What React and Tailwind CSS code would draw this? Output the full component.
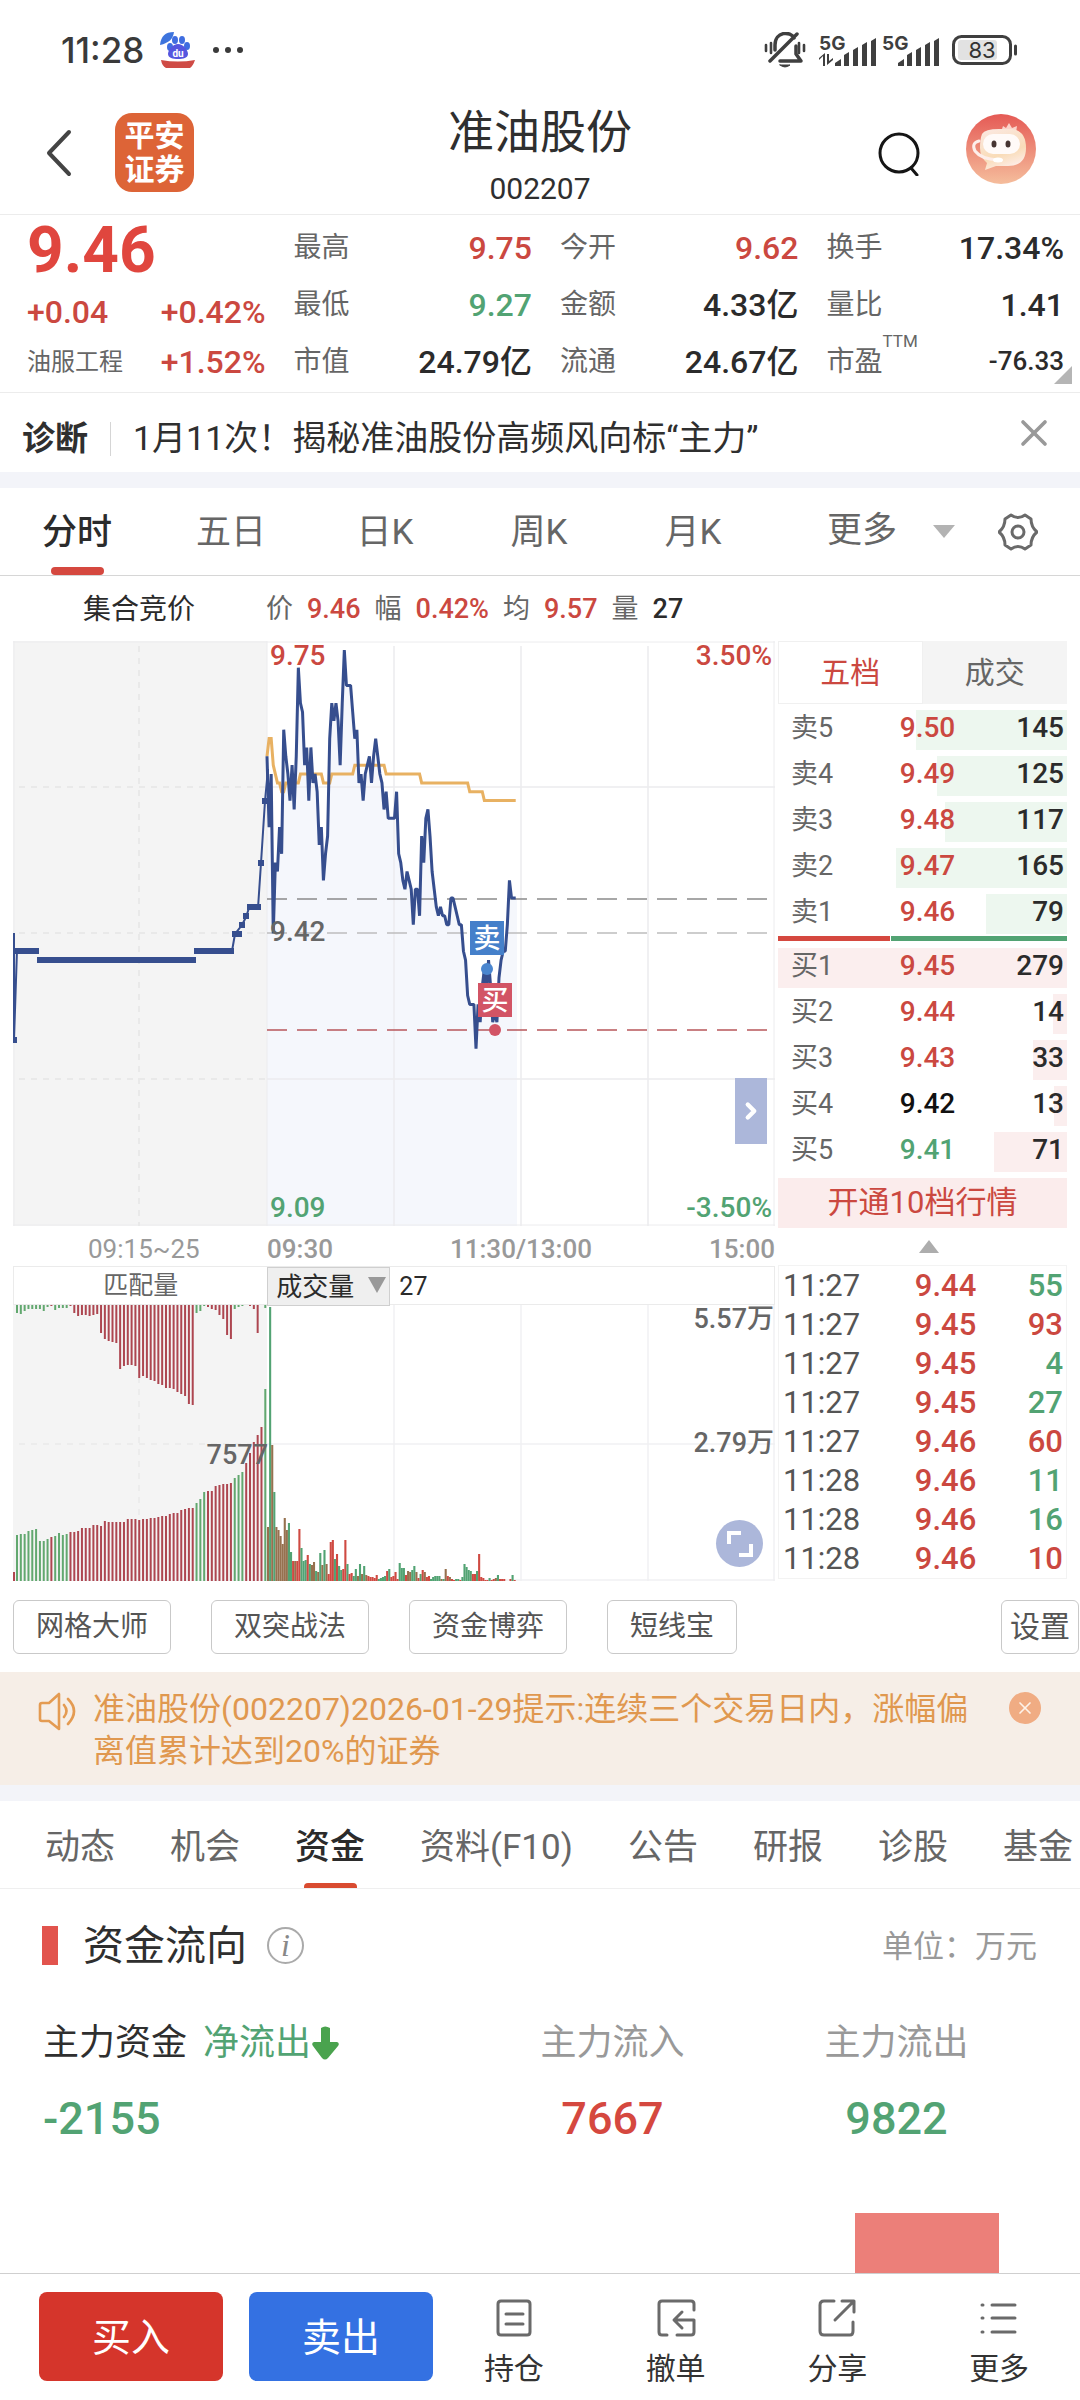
import { useState } from "react";
import { ChevronRight, X } from "lucide-react";

const QUOTES = [
  [["最高", "9.75", "up"], ["今开", "9.62", "up"], ["换手", "17.34%", "flat"]],
  [["最低", "9.27", "down"], ["金额", "4.33亿", "flat"], ["量比", "1.41", "flat"]],
  [["市值", "24.79亿", "flat"], ["流通", "24.67亿", "flat"], ["市盈", "-76.33", "flat"]],
];

const TONE = {
  up: "text-[#cb4840]",
  down: "text-[#52a373]",
  flat: "text-[#2b2b2b]",
};

const PERIODS = ["分时", "五日", "日K", "周K", "月K"];
const TOOLS = ["网格大师", "双突战法", "资金博弈", "短线宝"];
const SECTIONS = ["动态", "机会", "资金", "资料(F10)", "公告", "研报", "诊股", "基金"];

const ASKS = [
  ["卖5", "9.50", 145],
  ["卖4", "9.49", 125],
  ["卖3", "9.48", 117],
  ["卖2", "9.47", 165],
  ["卖1", "9.46", 79],
];
const BIDS = [
  ["买1", "9.45", 279],
  ["买2", "9.44", 14],
  ["买3", "9.43", 33],
  ["买4", "9.42", 13],
  ["买5", "9.41", 71],
];
const MAX_LEVEL = 279;

const TRADES = [
  ["11:27", "9.44", 55, "down"],
  ["11:27", "9.45", 93, "up"],
  ["11:27", "9.45", 4, "down"],
  ["11:27", "9.45", 27, "down"],
  ["11:27", "9.46", 60, "up"],
  ["11:28", "9.46", 11, "down"],
  ["11:28", "9.46", 16, "down"],
  ["11:28", "9.46", 10, "up"],
];

// 每分钟价格，单位为分，相对昨收 9.42
const PRICE = [
  20, 12, 18, 0, 8, 7, 12, 9, 23, 20, 18, 15, 19, 14, 20, 30, 26, 25, 19, 21,
  15, 21, 17, 18, 16, 10, 12, 6, 9, 11, 22, 26, 24, 26, 24, 19, 26, 32, 28, 28,
  28, 25, 22, 23, 17, 18, 15, 18, 19, 20, 17, 20, 22, 20, 18, 17, 14, 16, 13, 13,
  13, 13, 16, 9, 8, 6, 5, 7, 6, 5, 1, 5, 5, 2, 11, 8, 13, 14, 11, 7,
  5, 3, 2, 3, 2, 2, 1, 1, 4, 4, 3, 2, 1, 1, -2, -3, -7, -8, -8, -8,
  -13, -8, -10, -6, -4, -7, -3, -6, -10, -9, -10, -5, -3, -2, -2, 1, 6, 4, 4, 4,
];

// 均价：[分钟, 值]
const AVERAGE = [
  [0, 20], [1, 22], [2, 22], [3, 19], [5, 17], [6, 17], [7, 16], [8, 16], [9, 17],
  [15, 17], [16, 18], [26, 18], [27, 17], [30, 17], [31, 18], [41, 18], [42, 19],
  [56, 19], [57, 18], [73, 18], [74, 17], [96, 17], [97, 16], [103, 16], [104, 15], [119, 15],
];

const AUCTION_MATCHED = [
  46, 47, 47, 50, 51, 52, 40, 40, 42, 44, 45, 48, 46, 47, 49, 49, 50, 53, 53, 53,
  56, 56, 55, 60, 59, 59, 59, 59, 59, 62, 62, 62, 61, 62, 62, 63, 63, 64, 65, 65,
  67, 68, 68, 71, 72, 73, 73, 78, 82, 89, 90, 90, 95, 96, 97, 97, 98, 103, 106, 109,
  118, 128, 139, 146, 154, 192,
];
const AUCTION_UNMATCHED = [
  8, 9, 6, 4, 4, 4, 4, 6, 2, 1, 5, 3, 3, 3, 1, 8, 11, 10, 10, 11,
  10, 9, 28, 34, 36, 37, 38, 64, 61, 60, 60, 61, 73, 71, 73, 75, 76, 79, 80, 83,
  83, 84, 87, 89, 91, 99, 100, 8, 6, 1, 2, 4, 5, 10, 14, 30, 34, 4, 2, 1,
  0, 1, 4, 28, 0, 3,
];
const AUCTION_SIDE =
  "gggggggggrggggrrrrrrrrrrrrrrrrrrrrrrrrrrrrrrrrrgggrrrrrrrgggrrrrrg";

const VOLUME = [
  [54, "b"], [274, "g"], [136, "b"], [89, "g"], [54, "b"], [51, "b"], [45, "b"], [37, "b"],
  [63, "b"], [51, "b"], [58, "g"], [29, "g"], [20, "r"], [20, "b"], [20, "r"], [52, "r"],
  [33, "g"], [20, "g"], [21, "g"], [26, "r"], [17, "g"], [16, "b"], [19, "b"], [10, "g"],
  [9, "b"], [28, "g"], [16, "b"], [31, "g"], [17, "b"], [7, "r"], [39, "r"], [41, "r"],
  [22, "g"], [27, "r"], [15, "g"], [11, "g"], [12, "r"], [41, "r"], [17, "g"], [7, "r"],
  [8, "r"], [5, "g"], [12, "g"], [5, "b"], [17, "g"], [7, "b"], [15, "g"], [6, "b"],
  [5, "r"], [4, "r"], [4, "r"], [3, "r"], [6, "r"], [2, "g"], [3, "g"], [4, "g"],
  [5, "g"], [10, "r"], [12, "g"], [4, "r"], [5, "r"], [9, "r"], [2, "r"], [18, "g"],
  [13, "g"], [13, "g"], [6, "r"], [10, "b"], [9, "b"], [11, "g"], [15, "g"], [9, "b"],
  [3, "r"], [7, "g"], [11, "r"], [9, "b"], [4, "r"], [5, "r"], [2, "g"], [4, "g"],
  [5, "g"], [5, "g"], [5, "g"], [2, "b"], [2, "g"], [12, "b"], [5, "r"], [4, "b"],
  [2, "r"], [1, "r"], [2, "g"], [2, "g"], [1, "r"], [4, "g"], [17, "g"], [14, "g"],
  [11, "g"], [10, "g"], [7, "r"], [7, "r"], [10, "g"], [27, "r"], [4, "r"], [3, "r"],
  [1, "r"], [1, "r"], [3, "g"], [1, "r"], [2, "r"], [3, "b"], [6, "g"], [2, "r"],
  [2, "r"], [2, "r"], [0, "r"], [0, "r"], [2, "r"], [6, "g"], [1, "r"],
];

const BAR_COLOR = { g: "#52a373", r: "#cf4a42", b: "#96714f" };

const minuteX = (m) => 254 + m * 2.09;
const priceY = (t) => 292.5 - t * 8.86;
const toPoints = (list) => list.map(([m, t]) => `${minuteX(m)},${priceY(t)}`).join(" ");

function StatusBar() {
  return (
    <div className="flex h-[100px] items-center pl-[61px] pr-[62px] text-[#3a3a3a]">
      <span className="font-[Inter] text-[35px] font-medium">11:28</span>
      <svg className="ml-4 size-[36px]" viewBox="0 0 36 36">
        <path d="M0 13C1 4 5 0 14 0c-1 7-5 11-14 13z" fill="#3d74dd" />
        <ellipse cx="10" cy="15" rx="3" ry="4" fill="#3f6de0" />
        <ellipse cx="15" cy="8" rx="3" ry="4" fill="#3f6de0" />
        <ellipse cx="22" cy="8" rx="3" ry="4" fill="#3f6de0" />
        <ellipse cx="27" cy="14" rx="3" ry="4" fill="#3f6de0" />
        <path d="M18 12c5 0 10 6 10 10 0 4-5 5-10 5S8 26 8 22c0-4 5-10 10-10z" fill="#5556df" />
        <text x="18" y="25" textAnchor="middle" fontSize="10" fontWeight="700" fill="#fff">du</text>
        <path d="M1 28q17 3 34 0-2 6-5 8H6q-4-2-5-8z" fill="#cf4b45" />
      </svg>
      <svg className="ml-4 h-2 w-8" viewBox="0 0 32 8" fill="#3a3a3a">
        <circle cx="4" cy="4" r="3" />
        <circle cx="16" cy="4" r="3" />
        <circle cx="28" cy="4" r="3" />
      </svg>
      <svg className="ml-auto h-[36px] w-[42px]" viewBox="0 0 42 36" fill="none" stroke="#3f3f3f" strokeWidth="3.500" strokeLinecap="round" strokeLinejoin="round">
        <path d="M11 18v-5C11-1 27-1 30 6M16 29h21l-5-7v-8M6 29L33 2" />
        <path d="M2 13v6M7 11v10M35 11v10M40 13v6" strokeWidth="2.600" />
        <path d="M16 33h10q-5 4-10 0z" fill="#3f3f3f" strokeWidth="1" />
      </svg>
      <Signal arrows />
      <Signal />
      <svg className="ml-3 h-[30px] w-[66px]" viewBox="0 0 66 30">
        <rect x="6" y="5" width="39" height="20" rx="3" fill="#e2e2e2" />
        <rect x="1.500" y="1.500" width="57" height="27" rx="8" fill="none" stroke="#3f3f3f" strokeWidth="3" />
        <path d="M63.500 11v8" stroke="#3f3f3f" strokeWidth="3" strokeLinecap="round" />
        <text x="30" y="23" textAnchor="middle" fontSize="22" className="font-[Inter]" fill="#333">83</text>
      </svg>
    </div>
  );
}

function Signal({ arrows }) {
  return (
    <svg className={arrows ? "ml-[13px] h-[40px] w-[58px] overflow-visible" : "ml-[5px] h-[40px] w-[58px] overflow-visible"} viewBox="0 0 58 40" fill="#3f3f3f">
      <text x="0" y="20" fontSize="19" fontWeight="700" className="font-[Inter]">5G</text>
      {arrows && <path d="M4 36V26L0 30v-2l6-5v13zM8 24v11l6-5v-2l-4 3v-7z" />}
      <path d="M16 36v-3l6-4v7zM25 36V25l5-3v14zM34 36V20l5-3v19zM43 36V15l5-3v24zM52 36v-25l5-3v28z" />
    </svg>
  );
}

function Header() {
  return (
    <header className="grid h-[115px] grid-cols-[1fr_auto_1fr] items-start border-b border-[#ececec]">
      <div className="flex items-center gap-[43px] pl-[44px] pt-[13px]">
        <button aria-label="返回" className="py-3">
          <svg className="h-12 w-7" viewBox="0 0 28 48" fill="none" stroke="#444" strokeWidth="4" strokeLinecap="round" strokeLinejoin="round">
            <path d="M25 3L5 24l20 21" />
          </svg>
        </button>
        <div className="grid size-[79px] place-content-center rounded-[17px] bg-[#dd6437] text-center text-[30px] font-bold leading-[34px] text-white">
          <span>平安</span>
          <span>证券</span>
        </div>
      </div>
      <div className="flex flex-col items-center text-[#2f2f2f]">
        <h1 className="text-[46px] leading-[64px]">准油股份</h1>
        <span className="text-[30px] leading-[50px]">002207</span>
      </div>
      <div className="flex items-center justify-end gap-[46px] pr-[44px] pt-[14px]">
        <button aria-label="搜索">
          <svg className="mt-2 h-[46px] w-[42px]" viewBox="0 0 42 46" fill="none" stroke="#151515" strokeWidth="3" strokeLinecap="round">
            <circle cx="21" cy="23" r="19" />
            <path d="M33 38l6 7" />
          </svg>
        </button>
        <button aria-label="智能客服">
          <svg className="size-[70px]" viewBox="0 0 70 70">
            <defs>
              <linearGradient id="face" x1="0" y1="0" x2="0" y2="1">
                <stop offset="0" stopColor="#e55a55" />
                <stop offset="1" stopColor="#f5bd9c" />
              </linearGradient>
              <linearGradient id="body" x1="0" y1="0" x2="0.4" y2="1">
                <stop offset="0" stopColor="#fbe9e4" />
                <stop offset="0.7" stopColor="#f9dcb8" />
                <stop offset="1" stopColor="#fdebe2" />
              </linearGradient>
            </defs>
            <circle cx="35" cy="35" r="35" fill="url(#face)" />
            <path d="M35 18l2-6 3 2 3-5 3 5 5-2-1 7z" fill="#fbd3ca" />
            <path d="M16 20q3-5 17-5h12q15 1 15 19c0 12-6 18-18 18H30l-11 4 2-7q-7-6-7-15 0-9 2-14z" fill="url(#body)" />
            <rect x="17" y="20" width="37" height="20" rx="10" fill="#fffaf8" />
            <ellipse cx="28" cy="30" rx="2.500" ry="3.500" fill="#463531" />
            <ellipse cx="42" cy="30" rx="2.500" ry="3.500" fill="#463531" />
            <path d="M13 27q-8 2-4 10 6 8 23 9" fill="none" stroke="#fdeeea" strokeWidth="3" strokeLinecap="round" />
            <ellipse cx="32" cy="46" rx="5" ry="2.500" fill="#fff" />
          </svg>
        </button>
      </div>
    </header>
  );
}

function Quote() {
  return (
    <section className="relative grid h-[178px] grid-cols-[239fr_239fr_239fr_238fr] gap-x-7 border-b border-[#ececec] pl-[27px] pr-4 text-[32px] font-medium">
      <div className="flex flex-col pt-1 text-[#cb4840]">
        <strong className="text-[64px] font-bold leading-[64px] text-[#e0463e]">9.46</strong>
        <div className="flex h-[58px] items-center justify-between">
          <span>+0.04</span>
          <span>+0.42%</span>
        </div>
        <div className="flex h-[42px] items-center justify-between">
          <span className="text-[24px] font-normal text-[#666]">油服工程</span>
          <span>+1.52%</span>
        </div>
      </div>
      {[0, 1, 2].map((col) => (
        <dl key={col} className="flex flex-col pt-1">
          {QUOTES.map((row) => {
            const [label, value, tone] = row[col];
            return (
              <div key={label} className="flex h-[57px] items-center justify-between">
                <dt className="text-[28px] font-normal text-[#666]">
                  {label}
                  {label === "市盈" && <sup className="-top-6 text-[17px]">TTM</sup>}
                </dt>
                <dd className={`${TONE[tone]} ${value === "-76.33" ? "text-[26px]" : ""}`}>{value}</dd>
              </div>
            );
          })}
        </dl>
      ))}
      <i className="absolute bottom-2 right-2 border-b-[18px] border-l-[18px] border-b-[#b5b5b5] border-l-transparent" />
    </section>
  );
}

function PeriodTabs({ period, onChange }) {
  return (
    <nav className="grid h-[88px] grid-cols-[770fr_310fr] border-b border-[#d6d6d6] text-[35px] text-[#666]">
      <div className="grid grid-cols-5">
        {PERIODS.map((p) => (
          <button
            key={p}
            onClick={() => onChange(p)}
            className={`flex flex-col items-center justify-between ${p === period ? "font-medium text-[#2b2b2b]" : ""}`}
          >
            <span className="pt-4 leading-[58px]">{p}</span>
            <i className={`h-2 w-[53px] rounded-full ${p === period ? "bg-[#d5483f]" : ""}`} />
          </button>
        ))}
      </div>
      <div className="flex items-center justify-between pl-[57px] pr-[42px]">
        <button className="flex items-center gap-9">
          更多
          <i className="border-x-[11px] border-t-[13px] border-x-transparent border-t-[#b3b3b3]" />
        </button>
        <button aria-label="图表设置">
          <svg className="size-[40px]" viewBox="0 0 40 40" fill="none" stroke="#6a6a6a" strokeWidth="3" strokeLinejoin="round">
            <path d="M13 3q7 5 14 0l6 4q0 8 6 13-6 5-6 13l-6 4q-7-5-14 0l-6-4q0-8-6-13 6-5 6-13z" />
            <circle cx="20" cy="20" r="6" />
          </svg>
        </button>
      </div>
    </nav>
  );
}

function PriceChart() {
  const line = toPoints(PRICE.map((t, i) => [i, t]));
  return (
    <svg className="block h-auto w-full overflow-visible text-[28px] font-medium" viewBox="0 0 762 585">
      <rect x="0" y="0" width="254" height="585" fill="#f4f4f4" />
      <polygon points={`254,585 ${line} 504,257 504,585`} fill="#f5f7fc" />
      <g stroke="#ececee" strokeWidth="2">
        <path d="M0 1h762M0 584h762M1 0v585M254 0v585M761 0v585" strokeWidth="1" />
        <path d="M381 5v580M508 5v580M635 5v580M254 146h508M254 438h508" strokeWidth="1.500" />
        <path d="M126 5v580M6 146h248M6 292h248M6 438h248" strokeDasharray="6 6" stroke="#e9e9e9" />
      </g>
      <g strokeDasharray="20 10" strokeWidth="1.500">
        <path d="M254 258h500" stroke="#8b8b8b" />
        <path d="M254 292h500" stroke="#bdbdbd" />
        <path d="M254 389h500" stroke="#b8575b" />
      </g>
      <polyline points={toPoints(AVERAGE)} fill="none" stroke="#e8b162" strokeWidth="3" />
      <polyline points={line} fill="none" stroke="#364e8e" strokeWidth="3" strokeLinejoin="bevel" />
      {/* 集合竞价 */}
      <g fill="none" stroke="#364e8e">
        <path d="M1 292v107l3-90M219 310l3-17 7-9 4-8 3-9M245 267l3-45 4-62 3-32" strokeWidth="2" />
        <path d="M2 310h24M24 319h159M181 310h40M219 293h10M226 284h6M230 275h6M234 266h14M245 222h6M249 160h6M0 399h4" strokeWidth="6" />
      </g>
      <text x="257" y="24" fill="#cb4840">9.75</text>
      <text x="257" y="300" fill="#666">9.42</text>
      <text x="257" y="576" fill="#52a373">9.09</text>
      <text x="759" y="24" textAnchor="end" fill="#cb4840">3.50%</text>
      <text x="759" y="576" textAnchor="end" fill="#52a373">-3.50%</text>
      <g textAnchor="middle" fontSize="27">
        <circle cx="474" cy="328" r="6" fill="#4a86cf" />
        <rect x="457" y="280" width="34" height="34" fill="#4580ca" />
        <text x="474" y="307" fill="#fff">卖</text>
        <rect x="465" y="342" width="34" height="34" fill="#d25465" />
        <text x="482" y="369" fill="#fff">买</text>
        <circle cx="482" cy="389" r="6" fill="#d25465" />
      </g>
    </svg>
  );
}

function VolumeChart() {
  return (
    <svg className="block h-auto w-full overflow-visible text-[27px] font-medium" viewBox="0 0 762 276">
      <rect x="0" y="0" width="254" height="276" fill="#f4f4f4" />
      <g stroke="#f1f1f3" strokeWidth="1.500" fill="none">
        <path d="M381 0v276M508 0v276M635 0v276M254 139h508M761 0v276M0 275h762" />
        <path d="M126 0v276M6 139h248" strokeDasharray="6 6" stroke="#e9e9e9" />
      </g>
      <rect x="0" y="267" width="2" height="9" fill="#b14650" />
      {AUCTION_MATCHED.map((h, i) => {
        const color = AUCTION_SIDE[i] === "g" ? "#62a86f" : "#ad4650";
        const x = 3 + i * 3.82;
        return (
          <g key={i} fill={color}>
            <rect x={x} y={276 - h} width="2" height={h} />
            <rect x={x} y="0" width="2" height={AUCTION_UNMATCHED[i]} />
          </g>
        );
      })}
      {VOLUME.map(([h, side], i) => (
        <rect key={i} x={minuteX(i)} y={276 - h} width="2.100" height={h} fill={BAR_COLOR[side]} />
      ))}
      <g fill="#666">
        <text x="255" y="159" textAnchor="end">7577</text>
        <text x="761" y="23" textAnchor="end">5.57万</text>
        <text x="761" y="147" textAnchor="end">2.79万</text>
      </g>
    </svg>
  );
}

function ChartColumn() {
  return (
    <div>
      <div className="relative">
        <PriceChart />
        <button aria-label="收起盘口" className="absolute bottom-[14%] right-2 grid h-[66px] w-8 place-items-center bg-[#acb7da] text-white">
          <ChevronRight size={26} strokeWidth={4} />
        </button>
      </div>
      <div className="grid h-[40px] grid-cols-[254fr_508fr] items-center pt-1 text-[26px] text-[#999]">
        <span className="pl-[75px]">09:15~25</span>
        <div className="grid grid-cols-3 font-medium">
          <span>09:30</span>
          <span className="text-center">11:30/13:00</span>
          <span className="text-right">15:00</span>
        </div>
      </div>
      <div className="grid h-[39px] grid-cols-[254fr_508fr] border border-[#ebebeb]">
        <span className="text-center text-[25px] leading-[38px] text-[#666]">匹配量</span>
        <div className="flex items-center gap-[9px]">
          <label className="relative">
            <select aria-label="副图指标" className="h-[39px] w-[123px] appearance-none border border-[#cfcfcf] bg-[#efefef] pl-2 text-[26px] leading-[36px] text-[#2b2b2b]">
              <option>成交量</option>
            </select>
            <i className="pointer-events-none absolute right-1 top-[10px] border-x-[9px] border-t-[16px] border-x-transparent border-t-[#999]" />
          </label>
          <span className="text-[25px] text-[#2b2b2b]">27</span>
        </div>
      </div>
      <div className="relative">
        <VolumeChart />
        <button aria-label="全屏" className="absolute bottom-[14px] right-3 grid size-[47px] place-items-center rounded-full bg-[#acb7da]">
          <svg className="size-[28px]" viewBox="0 0 28 28" fill="none" stroke="#fff" strokeWidth="4">
            <path d="M3 14V3h12M25 14v11H13" />
          </svg>
        </button>
      </div>
    </div>
  );
}

function Levels({ rows, tint }) {
  return (
    <table className="w-full table-fixed border-separate border-spacing-x-0 border-spacing-y-[6px] text-[28px]">
      <tbody>
        {rows.map(([label, price, vol]) => {
          const pct = (vol / MAX_LEVEL) * 100;
          const tone = price === "9.42" ? "text-[#111]" : price === "9.41" ? TONE.down : TONE.up;
          return (
            <tr key={label} style={{ background: `linear-gradient(to left, ${tint} ${pct}%, transparent ${pct}%)` }}>
              <th scope="row" className="h-[40px] p-0 pb-1 pl-[13px] text-left text-[27px] font-normal leading-[36px] text-[#666]">{label}</th>
              <td className={`p-0 pb-1 pl-[10px] text-center font-medium leading-[36px] ${tone}`}>{price}</td>
              <td className="p-0 pb-1 pr-[3px] text-right font-medium leading-[36px] text-[#2b2b2b]">{vol}</td>
            </tr>
          );
        })}
      </tbody>
    </table>
  );
}

function OrderBook() {
  return (
    <div>
      <div className="grid h-[63px] grid-cols-2 text-[30px]">
        <button className="border border-[#f0f0f0] text-[#cb4840]">五档</button>
        <button className="bg-[#f4f4f4] text-[#666]">成交</button>
      </div>
      <Levels rows={ASKS} tint="#edf7ef" />
      <div className="-mt-1 mb-px flex h-[5px] gap-px">
        <i className="flex-[39] bg-[#d5483f]" />
        <i className="flex-[61] bg-[#52a373]" />
      </div>
      <Levels rows={BIDS} tint="#fbeeee" />
      <button className="block h-[50px] w-full bg-[#fbecec] text-[31px] text-[#cb4840]">开通10档行情</button>
      <div className="flex h-[37px] items-center justify-center pl-3">
        <i className="border-x-[10px] border-b-[13px] border-x-transparent border-b-[#adadad]" />
      </div>
      <table className="w-full table-fixed border border-[#f3f3f3] text-[31px] font-medium">
        <tbody>
          {TRADES.map(([time, price, vol, tone], i) => (
            <tr key={i} className="h-[39px] leading-[39px]">
              <td className="w-[42%] p-0 pl-1 font-normal text-[#555]">{time}</td>
              <td className="w-[32%] p-0 text-center text-[#cb4840]">{price}</td>
              <td className={`p-0 pr-[3px] text-right ${TONE[tone]}`}>{vol}</td>
            </tr>
          ))}
        </tbody>
      </table>
    </div>
  );
}

function Notice({ onClose }) {
  return (
    <div className="flex h-[113px] items-start bg-[#f6eee7] pl-[38px] pr-[39px] pt-4">
      <svg className="mr-4 mt-1 size-[39px] shrink-0" viewBox="0 0 39 39" fill="none" stroke="#e49b52" strokeWidth="2.600" strokeLinejoin="round" strokeLinecap="round">
        <path d="M21 2v35L11 29H4q-2 0-2-2V13q0-2 2-2h7z" />
        <path d="M26 13q5 6 0 12M30 7q12 12 0 25" />
      </svg>
      <p className="flex-1 text-[32px] leading-[42px] text-[#e0984f]">
        准油股份(002207)2026-01-29提示:连续三个交易日内，涨幅偏离值累计达到20%的证券
      </p>
      <button onClick={onClose} aria-label="关闭提示" className="ml-6 mt-1 grid size-8 place-items-center rounded-full bg-[#f0ac83] text-[#fdf3ea]">
        <X size={20} strokeWidth={2} />
      </button>
    </div>
  );
}

function FundFlow() {
  return (
    <section className="flex flex-1 flex-col">
      <div className="flex h-[112px] items-center pl-[42px] pr-[43px]">
        <i className="mr-[25px] h-[39px] w-4 bg-[#e2544d]" />
        <h2 className="pt-1 text-[41px] text-[#2f2f2f]">资金流向</h2>
        <button aria-label="说明" className="ml-5 grid size-[37px] place-items-center rounded-full border-2 border-[#aaa] font-['Liberation_Serif'] text-[32px] italic leading-[30px] text-[#888]">i</button>
        <span className="ml-auto pt-1 text-[31px] text-[#999]">单位：万元</span>
      </div>
      <div className="grid grid-cols-[428fr_283fr_285fr] pl-[43px] pr-[41px] text-[36px]">
        <div>
          <div className="flex h-[84px] items-center">
            <span className="text-[#2f2f2f]">主力资金</span>
            <span className="ml-4 text-[#52a373]">净流出</span>
            <svg className="ml-px h-[34px] w-[27px]" viewBox="0 0 27 34" fill="#4aa34e">
              <path d="M9 2q4-3 9 0v14h7q3 1 1 4L16 32q-3 3-6 0L1 20q-2-3 1-4h7z" />
            </svg>
          </div>
          <div className="text-[45px] font-medium leading-[68px] text-[#52a373]">-2155</div>
        </div>
        <div className="text-center">
          <div className="h-[84px] leading-[84px] text-[#999]">主力流入</div>
          <div className="text-[45px] font-medium leading-[68px] text-[#d5483f]">7667</div>
        </div>
        <div className="text-center">
          <div className="h-[84px] leading-[84px] text-[#999]">主力流出</div>
          <div className="text-[45px] font-medium leading-[68px] text-[#52a373]">9822</div>
        </div>
      </div>
      <div className="flex flex-1 items-end justify-end pr-[7.5%] pt-[59px]">
        <i className="h-[60px] w-[144px] bg-[#ec7f79]" />
      </div>
    </section>
  );
}

const ACTIONS = [
  ["持仓", "M7 3h26q3 0 3 3v28q0 3-3 3H7q-3 0-3-3V6q0-3 3-3zM12 16h17M12 26h17"],
  ["撤单", "M38 12V6q0-3-3-3H6Q3 3 3 6v28q0 3 3 3h5M38 22H20M26 14l-8 8 8 8M38 22v12q0 3-3 3H21"],
  ["分享", "M17 3H7Q3 3 3 7v26q0 4 4 4h26q3 0 3-4V24M25 3h12v11M36 4L18 22"],
  ["更多", "M3 7h1M13 7h23M3 20h1M13 20h23M3 34h1M13 34h23"],
];

function ActionBar() {
  return (
    <footer className="sticky bottom-0 flex h-[127px] items-start border-t border-[#cfcfcf] bg-white pl-[39px]">
      <button className="mt-[18px] h-[89px] w-[184px] rounded-lg bg-[#d5352b] pt-1 text-[39px] text-white">买入</button>
      <button className="ml-[26px] mt-[18px] h-[89px] w-[184px] rounded-lg bg-[#3471e2] pt-1 text-[39px] text-white">卖出</button>
      <div className="grid flex-1 grid-cols-4 pt-6">
        {ACTIONS.map(([label, d]) => (
          <button key={label} className="flex flex-col items-center text-[30px] leading-[62px] text-[#333]">
            <svg className="size-10 shrink-0" viewBox="0 0 40 40" fill="none" stroke="#6a6a6a" strokeWidth="3" strokeLinecap="round" strokeLinejoin="round">
              <path d={d} />
            </svg>
            <span>{label}</span>
          </button>
        ))}
      </div>
    </footer>
  );
}

export default function App() {
  const [period, setPeriod] = useState("分时");
  const [section, setSection] = useState("资金");
  const [showDiag, setShowDiag] = useState(true);
  const [showNotice, setShowNotice] = useState(true);

  return (
    <div className="flex min-h-screen w-full flex-col bg-white font-[Roboto,'Noto_Sans_CJK_SC',sans-serif]">
      <StatusBar />
      <Header />
      <Quote />

      {showDiag && (
        <div className="flex h-[79px] items-center pl-[22px] pr-[28px] pt-3 text-[34px] text-[#2f2f2f]">
          <strong className="text-[33px]">诊断</strong>
          <i className="mx-[22px] h-[34px] w-px bg-[#d5d5d5]" />
          <p>1月11次！揭秘准油股份高频风向标“主力”</p>
          <button onClick={() => setShowDiag(false)} aria-label="关闭" className="mb-3 ml-auto text-[#999]">
            <X size={44} strokeWidth={2} className="-mr-1" />
          </button>
        </div>
      )}
      <div className="h-4 bg-[#f3f4f9]" />

      <PeriodTabs period={period} onChange={setPeriod} />

      <div className="flex h-[65px] items-center gap-[14px] pl-[83px] pt-[2px] text-[27px] text-[#666]">
        <span className="mr-[57px] text-[28px] text-[#2b2b2b]">集合竞价</span>
        <span>价</span>
        <b className="font-medium text-[#cb4840]">9.46</b>
        <span>幅</span>
        <b className="font-medium text-[#cb4840]">0.42%</b>
        <span>均</span>
        <b className="font-medium text-[#cb4840]">9.57</b>
        <span>量</span>
        <b className="font-medium text-[#2b2b2b]">27</b>
      </div>

      <main className="grid grid-cols-[762fr_289fr] gap-[3px] px-[13px]">
        <ChartColumn />
        <OrderBook />
      </main>

      <div className="flex h-[91px] items-center gap-10 pl-[13px] pr-px text-[28px] text-[#555]">
        {TOOLS.map((t) => (
          <button key={t} className="h-[54px] rounded-md border border-[#c9c9c9] px-[22px]">{t}</button>
        ))}
        <button className="ml-auto h-[54px] rounded-md border border-[#c9c9c9] px-2 text-[30px]">设置</button>
      </div>

      {showNotice && <Notice onClose={() => setShowNotice(false)} />}
      <div className="h-4 bg-[#f3f4f9]" />

      <nav className="flex h-[88px] items-stretch gap-[55px] overflow-hidden border-b border-[#efefef] pl-[45px] text-[35px] text-[#666]">
        {SECTIONS.map((s) => (
          <button
            key={s}
            onClick={() => setSection(s)}
            className={`flex shrink-0 flex-col items-center justify-between whitespace-nowrap ${s === section ? "font-medium text-[#2b2b2b]" : ""}`}
          >
            <span className="pt-[18px] leading-[58px]">{s}</span>
            <i className={`h-[5px] w-[53px] rounded-t ${s === section ? "bg-[#d94b30]" : ""}`} />
          </button>
        ))}
      </nav>

      <FundFlow />
      <ActionBar />
    </div>
  );
}
